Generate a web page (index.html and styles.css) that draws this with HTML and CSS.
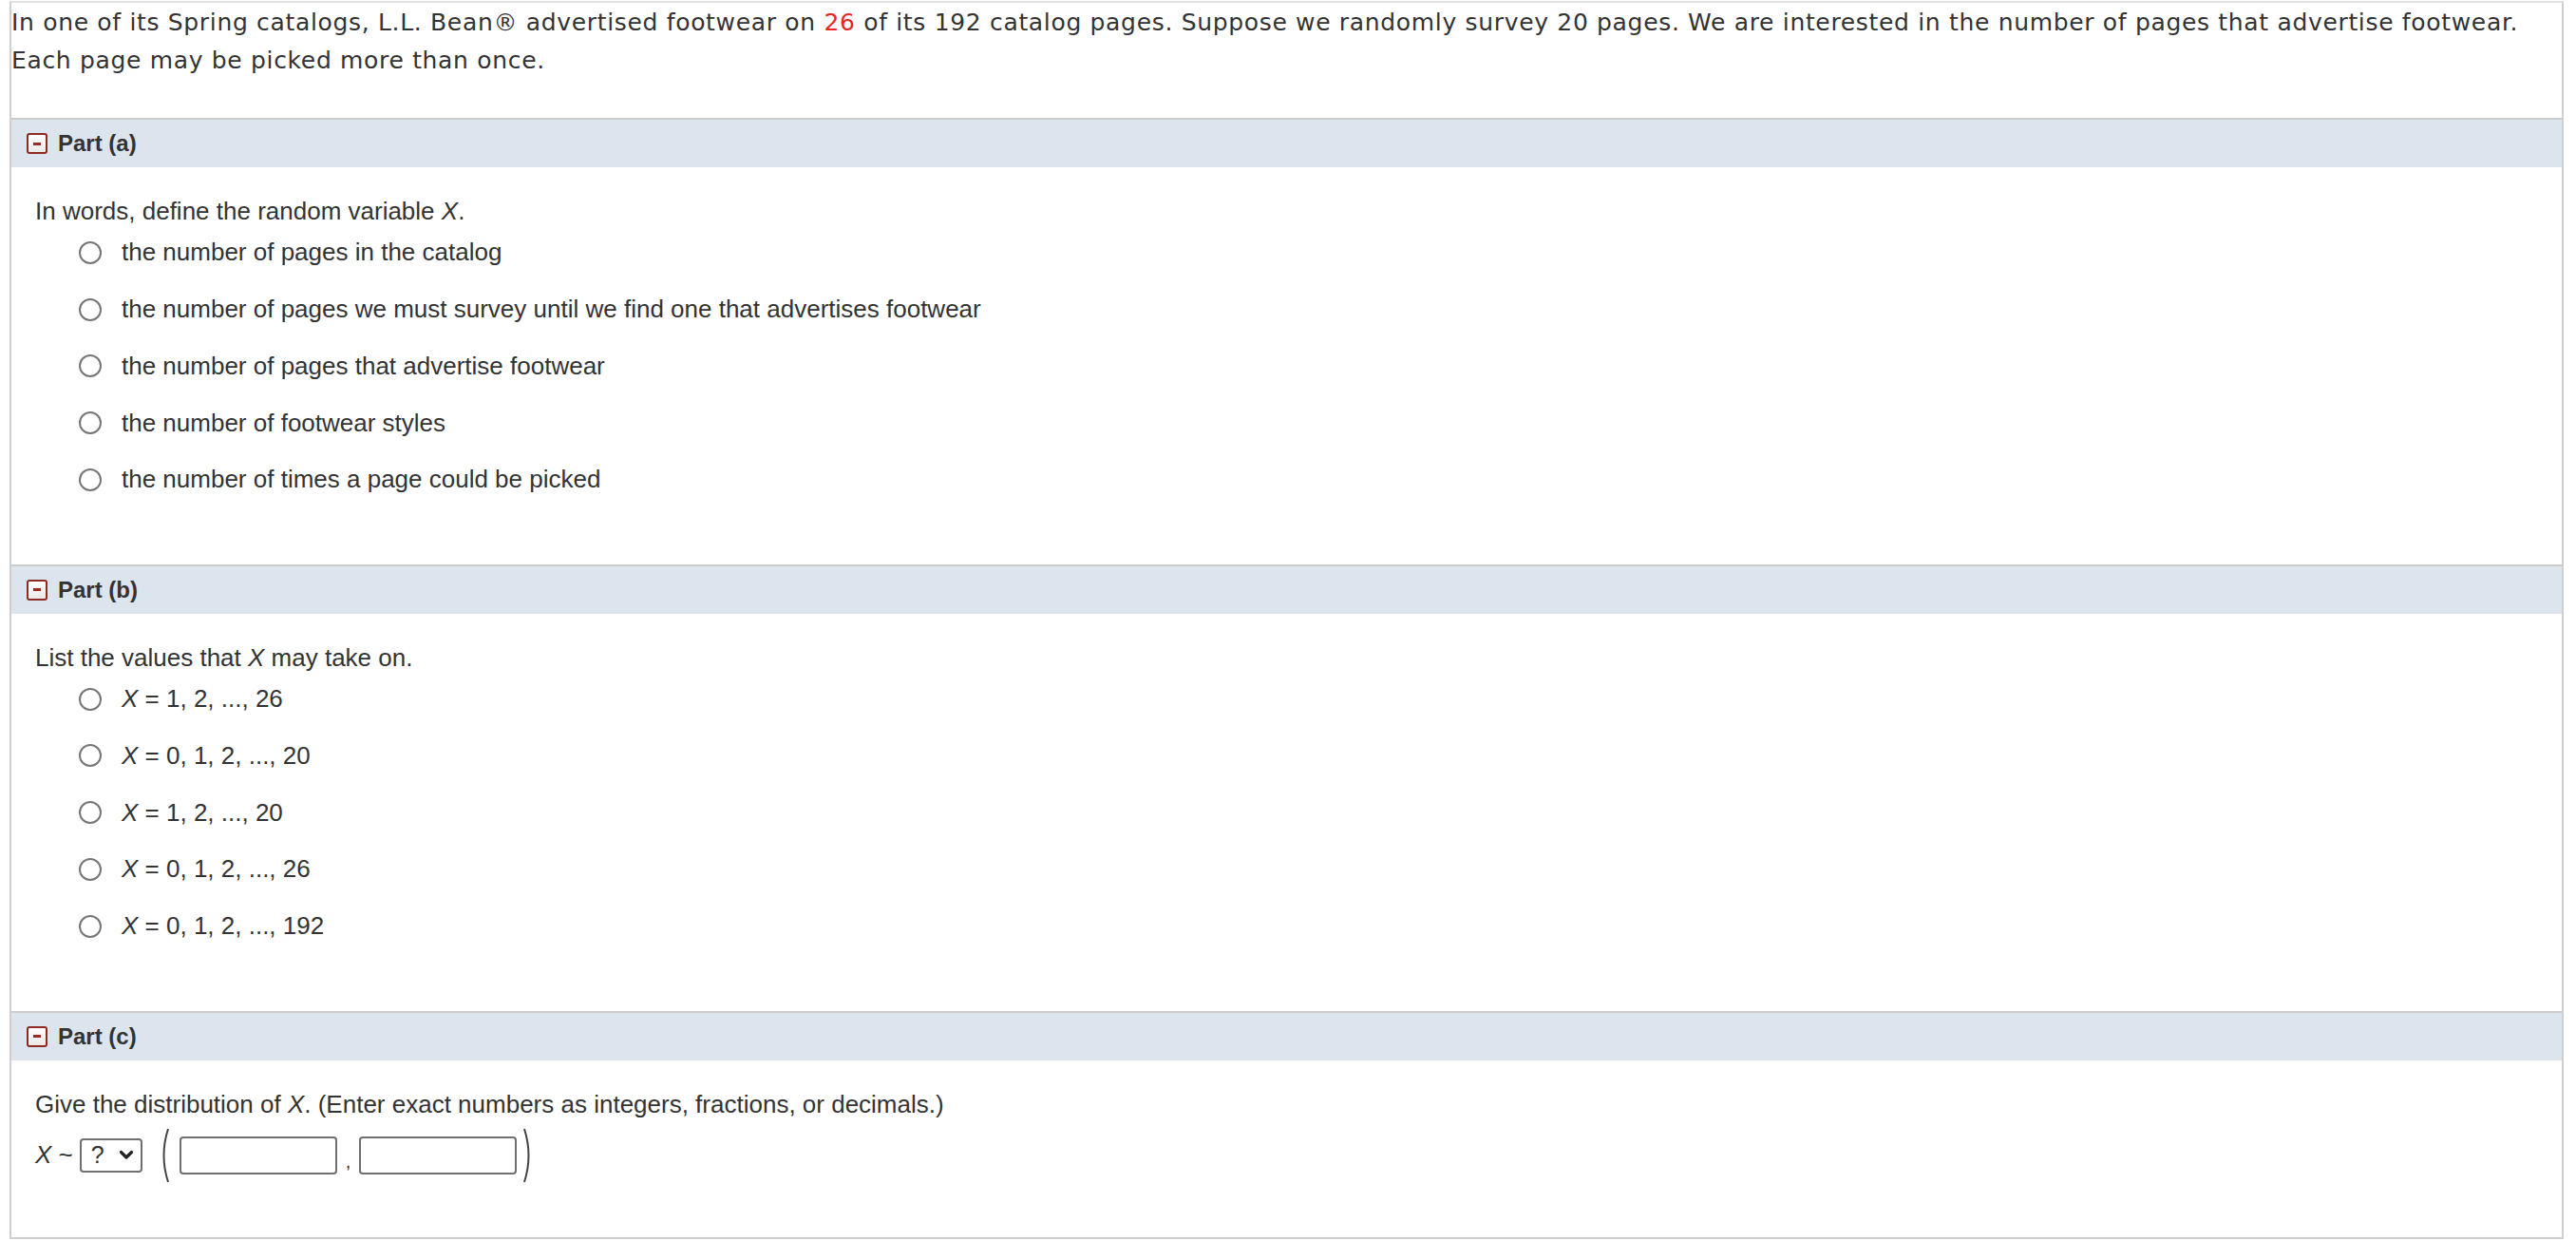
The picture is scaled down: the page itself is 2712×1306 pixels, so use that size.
FILE: index.html
```html
<!DOCTYPE html>
<html lang="en">
<head>
<meta charset="utf-8">
<title>L.L. Bean footwear</title>
<link rel="stylesheet" href="styles.css">
</head>
<body>
<div class="problem">
  <div class="intro">In one of its Spring catalogs, L.L. Bean® advertised footwear on <span class="red">26</span> of its 192 catalog pages. Suppose we randomly survey 20 pages. We are interested in the number of pages that advertise footwear. Each page may be picked more than once.</div>

  <section class="part">
    <div class="part-head">
      <span class="toggle"><span class="minus"></span></span>
      <span class="part-title">Part (a)</span>
    </div>
    <div class="part-body">
      <div class="question">In words, define the random variable <i>X</i>.</div>
      <ul class="options">
        <li class="option"><span class="radio"></span><span>the number of pages in the catalog</span></li>
        <li class="option"><span class="radio"></span><span>the number of pages we must survey until we find one that advertises footwear</span></li>
        <li class="option"><span class="radio"></span><span>the number of pages that advertise footwear</span></li>
        <li class="option"><span class="radio"></span><span>the number of footwear styles</span></li>
        <li class="option"><span class="radio"></span><span>the number of times a page could be picked</span></li>
      </ul>
    </div>
  </section>

  <section class="part">
    <div class="part-head">
      <span class="toggle"><span class="minus"></span></span>
      <span class="part-title">Part (b)</span>
    </div>
    <div class="part-body">
      <div class="question">List the values that <i>X</i> may take on.</div>
      <ul class="options">
        <li class="option"><span class="radio"></span><span><i>X</i> = 1, 2, ..., 26</span></li>
        <li class="option"><span class="radio"></span><span><i>X</i> = 0, 1, 2, ..., 20</span></li>
        <li class="option"><span class="radio"></span><span><i>X</i> = 1, 2, ..., 20</span></li>
        <li class="option"><span class="radio"></span><span><i>X</i> = 0, 1, 2, ..., 26</span></li>
        <li class="option"><span class="radio"></span><span><i>X</i> = 0, 1, 2, ..., 192</span></li>
      </ul>
    </div>
  </section>

  <section class="part part-last">
    <div class="part-head">
      <span class="toggle"><span class="minus"></span></span>
      <span class="part-title">Part (c)</span>
    </div>
    <div class="part-body">
      <div class="question">Give the distribution of <i>X</i>. (Enter exact numbers as integers, fractions, or decimals.)</div>
      <div class="dist-row">
        <span class="dist-x"><i>X</i> ~</span>
        <span class="select"><span class="q">?</span><svg class="chev" width="16" height="11" viewBox="0 0 16 11"><path d="M2.5 2.5 L8 8 L13.5 2.5" fill="none" stroke="#222" stroke-width="3.2" stroke-linecap="round" stroke-linejoin="round"/></svg></span>
        <svg class="paren paren-l" width="12" height="58" viewBox="0 0 12 58"><path d="M10 1 Q1 29 10 57" fill="none" stroke="#444" stroke-width="2"/></svg>
        <span class="box"></span>
        <span class="comma">,</span>
        <span class="box"></span>
        <svg class="paren paren-r" width="12" height="58" viewBox="0 0 12 58"><path d="M2 1 Q11 29 2 57" fill="none" stroke="#444" stroke-width="2"/></svg>
      </div>
    </div>
  </section>
</div>
</body>
</html>
```

FILE: styles.css
```css
html, body {
  margin: 0;
  padding: 0;
  background: #fff;
}

.problem {
  margin: 1px 0 0 10px;
  width: 2689px;
  box-sizing: border-box;
  border: 2px solid #cfcfcf;
  border-top-color: #e2e2e2;
}

.intro {
  font-family: "DejaVu Sans", Verdana, sans-serif;
  font-size: 25px;
  letter-spacing: 0.67px;
  line-height: 40px;
  color: #333;
  padding: 1px 0 40px 0;
}

.red {
  color: #e8261e;
}

.part {
  border-top: 2px solid #cccccc;
}

.part-head {
  height: 50px;
  background: #dce5ee;
  display: flex;
  align-items: center;
  padding-left: 16px;
  gap: 11px;
}

.toggle {
  width: 18px;
  height: 18px;
  border: 2px solid #8e2a22;
  border-radius: 3px;
  background: linear-gradient(#ffffff, #ece8e8);
  display: flex;
  align-items: center;
  justify-content: center;
}

.minus {
  width: 8px;
  height: 3px;
  background: #9b2b22;
}

.part-title {
  font-family: "Liberation Sans", Arial, sans-serif;
  font-weight: bold;
  font-size: 24px;
  color: #333;
}

.part-body {
  padding: 33px 0 59px 25px;
  font-family: "Liberation Sans", Arial, sans-serif;
  font-size: 26px;
  color: #333;
}

.part-last .part-body {
  padding-bottom: 56px;
}

.question {
  line-height: 27px;
}

.options {
  list-style: none;
  margin: 0;
  padding: 0 0 0 46px;
}

.option {
  height: 59.75px;
  display: flex;
  align-items: center;
  gap: 21px;
}

.radio {
  width: 20px;
  height: 20px;
  border: 2px solid #767676;
  border-radius: 50%;
  flex: none;
}

.dist-row {
  margin-top: 10px;
  height: 60px;
  display: flex;
  align-items: center;
}

.dist-x {
  margin-right: 7px;
}

.select {
  height: 32px;
  border: 2px solid #6f6f6f;
  border-radius: 4px;
  display: flex;
  align-items: center;
  justify-content: space-between;
  padding: 0 7px 0 10px;
  width: 45px;
  margin-right: 17px;
}

.q {
  font-size: 25px;
  color: #333;
}

.paren {
  flex: none;
}

.paren-l {
  margin-right: 10px;
}

.paren-r {
  margin-left: 6px;
}

.box {
  width: 162px;
  height: 36px;
  border: 2px solid #6f6f6f;
  border-radius: 4px;
}

.comma {
  align-self: flex-end;
  margin: 0 9px 14px 9px;
  font-size: 20px;
  line-height: 20px;
}
```
